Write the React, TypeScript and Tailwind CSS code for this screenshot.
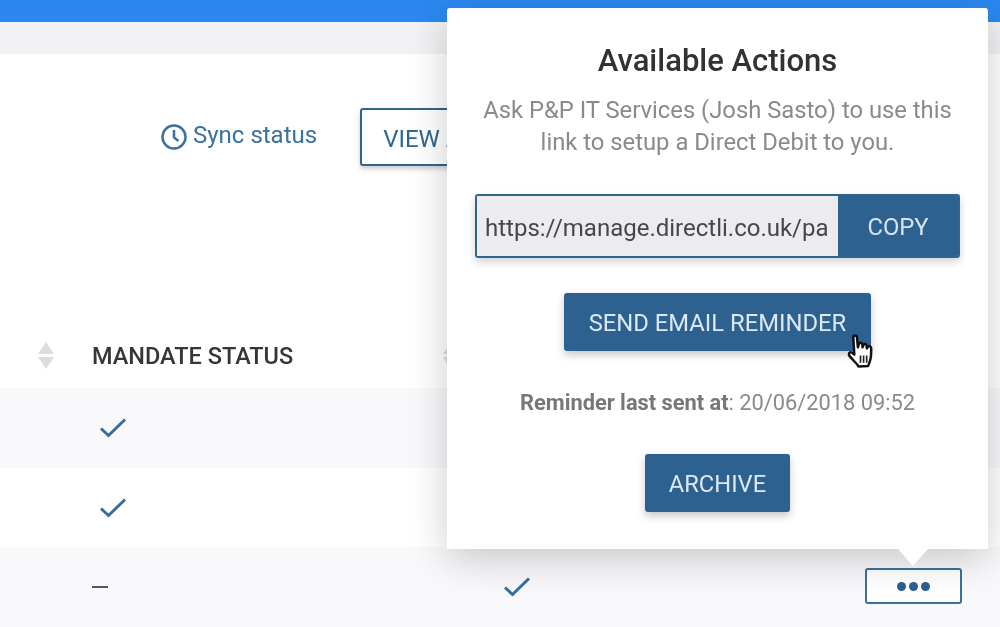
import React from "react";

const Check = () => (
  <svg width="28" height="22" viewBox="0 0 28 22" fill="none" stroke="#346f9c" strokeWidth="3">
    <path d="M2 11.5 L9.5 18.5 L26 2.5" />
  </svg>
);

const Sort = () => (
  <svg width="16" height="27" viewBox="0 0 16 27" fill="#dcdcdf">
    <path d="M8 0 L16 12 H0 Z" />
    <path d="M0 15 H16 L8 27 Z" />
  </svg>
);

const Hand = () => (
  <svg width="27" height="35" viewBox="0 0 26 34">
    <path
      d="M6 3 C6 1 9.5 1 9.5 3 L10.5 13 L11.5 9.5 C12 8 14.5 8 14.7 10 L15 13 L16 10.5 C16.7 9 19 9.5 19 11.5 L19.2 14 L20 12.5 C21 11.2 23.5 12 23.4 14 C23.3 18 23.5 22 22.5 25 C22 27 21.5 28.5 20.5 31 L11 31.5 C9.5 28.5 6 26 2.5 21.5 C1 19.5 2 17 4.5 18 L7 20 Z"
      fill="#ffffff"
      stroke="#111111"
      strokeWidth="2.4"
      strokeLinejoin="round"
    />
    <path d="M13 21 V28 M16 21 V28 M19 21 V28" stroke="#222222" strokeWidth="1.6" />
  </svg>
);

export default function App() {
  return (
    <div className="relative flex h-[627px] w-[1000px] flex-col overflow-hidden bg-white font-['Roboto',sans-serif] blur-[0.4px]">
      <div className="h-[22px] bg-[#2b88f0]" />
      <div className="h-[32px] bg-[#f2f2f4]" />

      <section className="flex h-[334px] flex-col">
        <div className="mt-[54px] flex items-center pl-[161px]">
          <div className="flex items-center gap-[6px] text-[24px] text-[#3a719d]">
            <svg width="26" height="26" viewBox="0 0 26 26" fill="none" stroke="#3a719d" strokeWidth="2.5">
              <circle cx="13" cy="13" r="11.5" />
              <path d="M13 6 V13.5 L17.5 17" />
            </svg>
            <span className="-mt-[4px]">Sync status</span>
          </div>
          <button className="ml-[43px] h-[58px] w-[200px] rounded-[3px] border-2 border-[#2f6690] bg-white pt-[4px] pl-[21px] text-left text-[24px] text-[#2f6690] shadow-[0_3px_5px_rgba(0,0,0,0.2)]">
            VIEW ALL
          </button>
        </div>
        <div className="mt-auto flex h-[66px] items-center pl-[38px]">
          <Sort />
          <span className="mt-[3px] ml-[38px] text-[23.5px] font-medium text-[#36363a]">MANDATE STATUS</span>
          <span className="ml-[150px]">
            <Sort />
          </span>
        </div>
      </section>

      <div className="flex h-[80px] items-center bg-[#f9f9fb] pl-[99px]">
        <Check />
      </div>
      <div className="flex h-[79px] items-center bg-white pl-[99px]">
        <Check />
      </div>
      <div className="flex h-[80px] items-center bg-[#f9f9fb] pl-[92px]">
        <span className="h-[2px] w-[16px] bg-[#55555a]" />
        <span className="ml-[395px]">
          <Check />
        </span>
        <button className="-mt-[2px] ml-[334px] flex h-[36px] w-[97px] items-center justify-center gap-[3px] rounded-[3px] border-2 border-[#3a719d] bg-white">
          <span className="h-[9px] w-[9px] rounded-full bg-[#2c6190]" />
          <span className="h-[9px] w-[9px] rounded-full bg-[#2c6190]" />
          <span className="h-[9px] w-[9px] rounded-full bg-[#2c6190]" />
        </button>
      </div>

      <div className="absolute left-[447px] top-[8px] flex h-[541px] w-[541px] flex-col items-center rounded-t-[3px] bg-white shadow-[0_10px_40px_rgba(0,0,0,0.2)]">
        <h2 className="mt-[33px] text-[31px] leading-[40px] font-medium text-[#323236]">Available Actions</h2>
        <p className="mt-[13px] w-[490px] text-center text-[23.8px] leading-[32px] text-[#8a8a8e]">
          Ask P&amp;P IT Services (Josh Sasto) to use this link to setup a Direct Debit to you.
        </p>

        <div className="mt-[36px] flex h-[64px] w-[485px] overflow-hidden rounded-[3px] border-2 border-[#2f6690] shadow-[0_4px_8px_rgba(0,0,0,0.18)]">
          <div className="flex w-[361px] items-center overflow-hidden bg-[#ececee] pt-[4px] pl-[8px] text-[24px] whitespace-nowrap text-[#47474b]">
            https://manage.directli.co.uk/pa
          </div>
          <div className="flex flex-1 items-center justify-center bg-[#2c6190] pt-[4px] text-[23.8px] text-[#d5e4f0]">COPY</div>
        </div>

        <button className="mt-[35px] h-[58px] w-[307px] rounded-[3px] bg-[#2c6190] pt-[4px] text-[23.8px] text-[#dce8f2] shadow-[0_4px_8px_rgba(0,0,0,0.22)]">
          SEND EMAIL REMINDER
        </button>

        <p className="mt-[38px] text-[21.8px] leading-[28px] text-[#8a8a8e]">
          <strong className="font-bold text-[#77777b]">Reminder last sent at</strong>: 20/06/2018 09:52
        </p>

        <button className="mt-[37px] h-[58px] w-[145px] rounded-[3px] bg-[#2c6190] pt-[4px] text-[23.7px] text-[#dce8f2] shadow-[0_4px_8px_rgba(0,0,0,0.22)]">
          ARCHIVE
        </button>

        <span className="absolute top-full left-[451px] h-0 w-0 border-x-[15px] border-t-[17px] border-x-transparent border-t-white" />
      </div>

      <div className="absolute left-[847px] top-[334px]">
        <Hand />
      </div>
    </div>
  );
}
